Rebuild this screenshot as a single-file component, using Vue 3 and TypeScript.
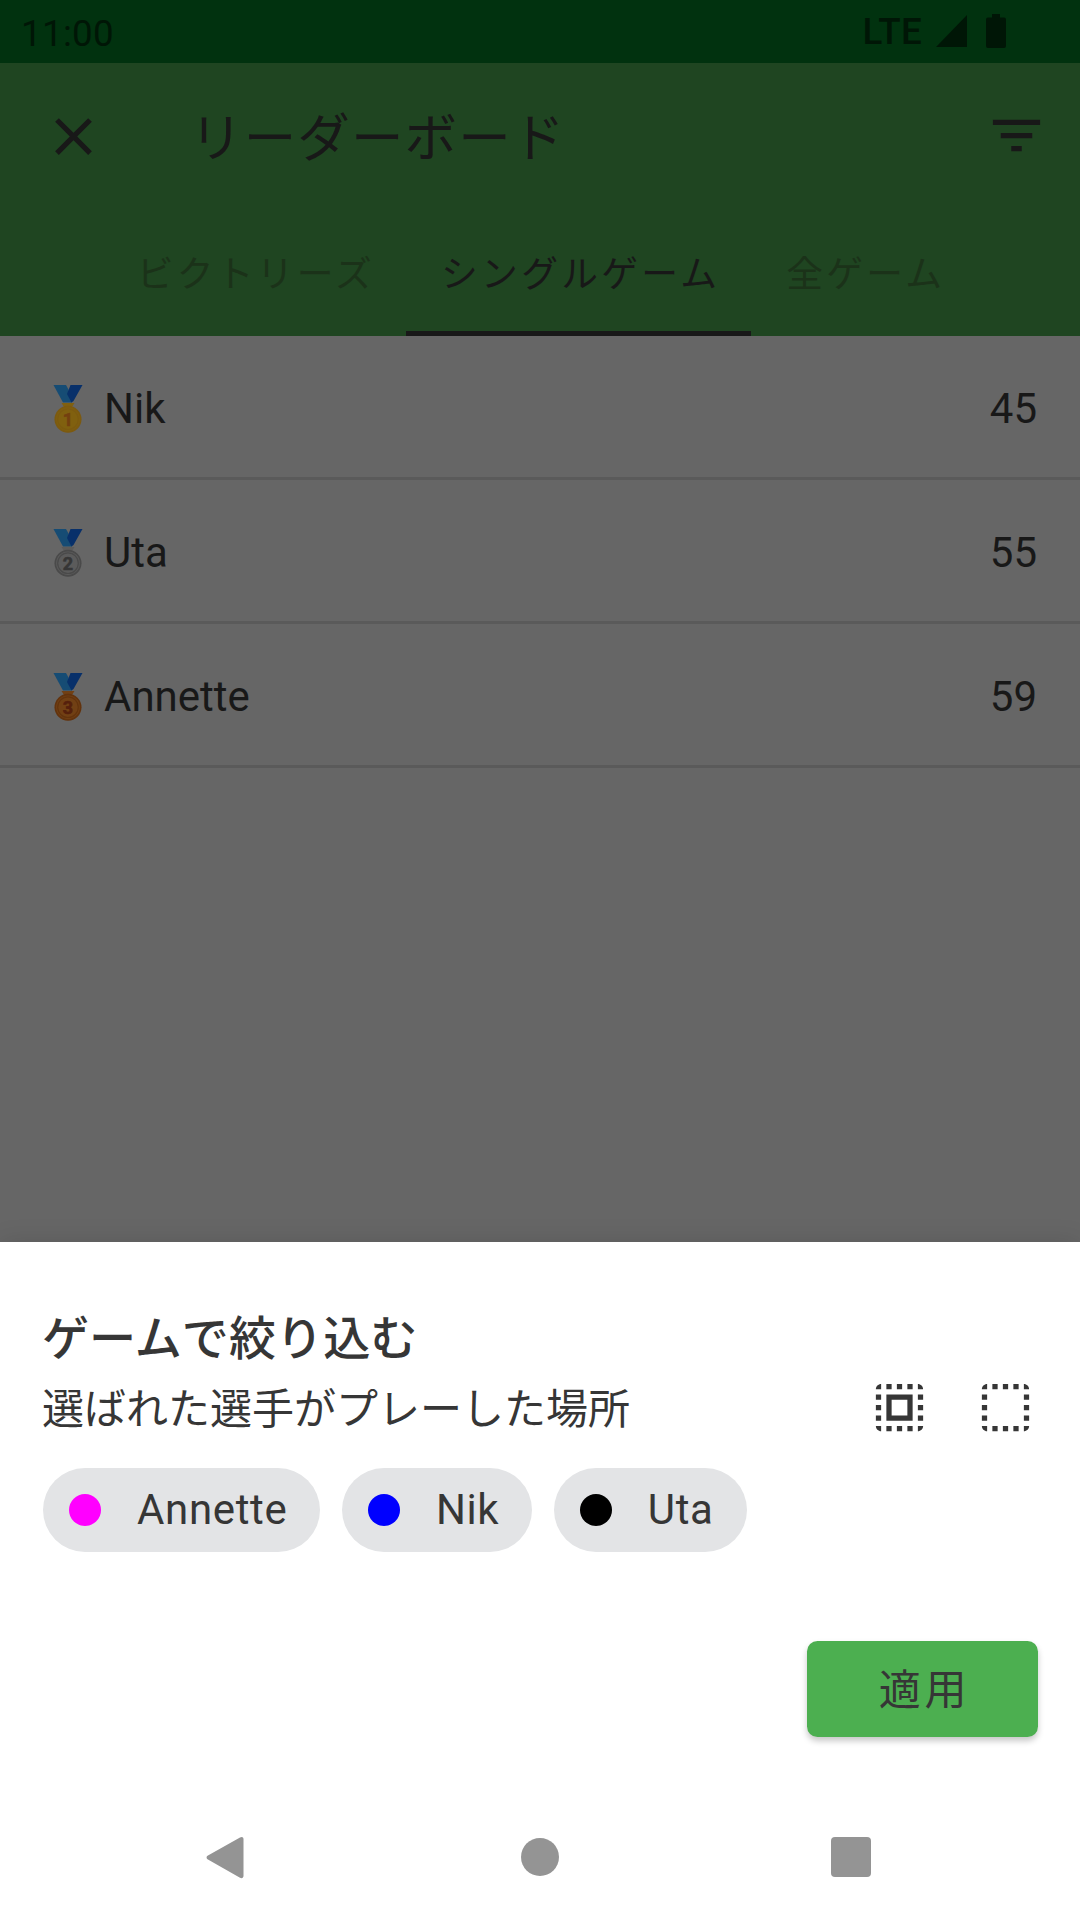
<script setup lang="ts">
interface Player {
  name: string
  score: number
  rank: number
  disc: string
  rim: string
  digit: string
}

interface Chip {
  name: string
  color: string
}

const tabs: { label: string; active: boolean }[] = [
  { label: 'ビクトリーズ', active: false },
  { label: 'シングルゲーム', active: true },
  { label: '全ゲーム', active: false },
]

const players: Player[] = [
  { name: 'Nik', score: 45, rank: 1, disc: '#80600f', rim: '#7c5a10', digit: '#74400f' },
  { name: 'Uta', score: 55, rank: 2, disc: '#5b5b5b', rim: '#4a4a4a', digit: '#363636' },
  { name: 'Annette', score: 59, rank: 3, disc: '#714014', rim: '#63330d', digit: '#55200c' },
]

const chips: Chip[] = [
  { name: 'Annette', color: '#ff00ff' },
  { name: 'Nik', color: '#0000ff' },
  { name: 'Uta', color: '#000000' },
]
</script>

<template>
  <div class="screen">
    <div class="status">
      <span class="clock">11:00</span>
      <span class="lte">LTE</span>
      <svg class="signal" viewBox="0 0 31 32"><path d="M31 0V32H0Z" /></svg>
      <svg class="battery" viewBox="0 0 20 34"><path d="M6 0h8v3.500h4a2 2 0 0 1 2 2V32a2 2 0 0 1-2 2H2a2 2 0 0 1-2-2V5.500a2 2 0 0 1 2-2h4z" /></svg>
    </div>

    <header class="appbar">
      <div class="toolbar">
        <svg class="icon" viewBox="0 0 24 24"><path d="M19 6.410 17.590 5 12 10.590 6.410 5 5 6.410 10.590 12 5 17.590 6.410 19 12 13.410 17.590 19 19 17.590 13.410 12z" /></svg>
        <h1 class="title">リーダーボード</h1>
        <svg class="icon filter" viewBox="0 0 24 24"><path d="M10 18h4v-2h-4v2zM3 6v2h18V6H3zm3 7h12v-2H6v2z" /></svg>
      </div>
      <nav class="tabs">
        <div v-for="t in tabs" :key="t.label" class="tab" :class="{ active: t.active }"><span>{{ t.label }}</span></div>
      </nav>
    </header>

    <main class="list">
      <div v-for="p in players" :key="p.rank" class="row">
        <svg class="medal" viewBox="0 0 30 48">
          <path d="M0.500 0H13L15.500 4.500 19 17.500H10Z" fill="#164c74" />
          <path d="M17.500 0H29.500L20.500 16 18.500 17.500 14 9Z" fill="#08306a" />
          <path d="M8.500 18h13l-2.500 4h-8z" :fill="p.disc" />
          <circle cx="15" cy="34.200" r="13.500" :fill="p.rim" />
          <circle cx="15" cy="34.200" r="11.800" :fill="p.disc" />
          <circle cx="15" cy="34.200" r="10.300" fill="none" :stroke="p.rim" stroke-width="1.200" />
          <text x="15" y="40.700" text-anchor="middle" :fill="p.digit" :stroke="p.digit">{{ p.rank }}</text>
        </svg>
        <span class="name">{{ p.name }}</span>
        <span class="score">{{ p.score }}</span>
      </div>
    </main>

    <section class="sheet">
      <h2 class="sheet-title">ゲームで絞り込む</h2>
      <div class="sub">
        <p>選ばれた選手がプレーした場所</p>
        <svg class="icon" viewBox="0 0 24 24"><path d="M3 5h2V3c-1.100 0-2 .9-2 2zm0 8h2v-2H3v2zm4 8h2v-2H7v2zM3 9h2V7H3v2zm10-6h-2v2h2V3zm6 0v2h2c0-1.100-.9-2-2-2zM5 21v-2H3c0 1.100.9 2 2 2zm-2-4h2v-2H3v2zM9 3H7v2h2V3zm2 18h2v-2h-2v2zm8-8h2v-2h-2v2zm0 8c1.100 0 2-.9 2-2h-2v2zm0-12h2V7h-2v2zm0 8h2v-2h-2v2zm-4 4h2v-2h-2v2zm0-16h2V3h-2v2zM7 17h10V7H7v10zm2-8h6v6H9V9z" /></svg>
        <svg class="icon" viewBox="0 0 24 24"><path d="M3 5h2V3c-1.100 0-2 .9-2 2zm0 8h2v-2H3v2zm4 8h2v-2H7v2zM3 9h2V7H3v2zm10-6h-2v2h2V3zm6 0v2h2c0-1.100-.9-2-2-2zM5 21v-2H3c0 1.100.9 2 2 2zm-2-4h2v-2H3v2zM9 3H7v2h2V3zm2 18h2v-2h-2v2zm8-8h2v-2h-2v2zm0 8c1.100 0 2-.9 2-2h-2v2zm0-12h2V7h-2v2zm0 8h2v-2h-2v2zm-4 4h2v-2h-2v2zm0-16h2V3h-2v2z" /></svg>
      </div>
      <div class="chips">
        <div v-for="c in chips" :key="c.name" class="chip">
          <i class="dot" :style="{ background: c.color }"></i>
          <span>{{ c.name }}</span>
        </div>
      </div>
      <button class="apply" type="button">適用</button>
    </section>

    <footer class="navbar">
      <svg width="38" height="43" viewBox="0 0 38 43"><path d="M34 1.500 1.500 19.800a2 2 0 0 0 0 3.400L34 41.700c1.800 1 3.500.2 3.500-1.600V3.100C37.500 1 35.800.4 34 1.500Z" /></svg>
      <svg class="home" width="40" height="40" viewBox="0 0 40 40"><circle cx="20" cy="20" r="19" /></svg>
      <svg width="40" height="40" viewBox="0 0 40 40"><rect width="40" height="40" rx="4" /></svg>
    </footer>
  </div>
</template>

<style>
body {
  margin: 0;
}
</style>

<style scoped>
.screen {
  width: 1080px;
  height: 1920px;
  display: flex;
  flex-direction: column;
  overflow: hidden;
  background: #666;
  color: #181818;
  font-family: Roboto, "Noto Sans CJK JP", sans-serif;
}
h1, h2, p {
  margin: 0;
  font-weight: 400;
}
svg {
  display: block;
  flex: none;
}
.icon {
  width: 63px;
  height: 63px;
  fill: currentColor;
}
.status {
  height: 63px;
  box-sizing: border-box;
  padding: 0 74px 0 21px;
  display: flex;
  align-items: flex-start;
  background: #01320f;
  color: #001606;
  font-size: 36.750px;
  line-height: 40px;
}
.clock {
  margin-top: 14px;
  letter-spacing: 0.300px;
}
.lte {
  margin: 12px 14px 0 auto;
  font-weight: 500;
  letter-spacing: 0.300px;
}
.signal {
  width: 31px;
  height: 32px;
  margin-top: 15px;
  fill: currentColor;
}
.battery {
  width: 20px;
  height: 34px;
  margin: 14px 0 0 19px;
  fill: currentColor;
}
.appbar {
  height: 273px;
  background: #1f4521;
}
.toolbar {
  height: 147px;
  box-sizing: border-box;
  padding: 0 32px 0 42px;
  display: flex;
  align-items: center;
}
.title {
  flex: 1;
  margin-left: 85px;
  padding-top: 4px;
  font-size: 52.500px;
  line-height: 60px;
  letter-spacing: 1.150px;
}
.filter {
  margin-bottom: 2px;
}
.tabs {
  height: 126px;
  display: flex;
  justify-content: center;
  padding-right: 2px;
}
.tab {
  height: 126px;
  padding: 2px 31px 0 35px;
  box-sizing: border-box;
  border-bottom: 5px solid transparent;
  line-height: 126px;
  font-size: 36.750px;
  letter-spacing: 3.280px;
  color: #1b3219;
}
.tab.active {
  color: #181818;
  border-color: #181818;
}
.row {
  height: 144px;
  box-sizing: border-box;
  padding: 4px 43px 0 53px;
  display: flex;
  align-items: center;
  border-bottom: 3px solid #5a5a5a;
  font-size: 42px;
}
.medal {
  width: 30px;
  height: 48px;
}
.medal text {
  font-size: 18px;
  font-weight: 700;
  stroke-width: 0.600px;
}
.name {
  flex: 1;
  margin-left: 21px;
}
.list {
  height: 906px;
}
.sheet {
  height: 558px;
  box-sizing: border-box;
  padding: 63px 42px 0;
  display: flex;
  flex-direction: column;
  background: #fff;
  color: #363636;
  box-shadow: 0 0 24px rgba(0, 0, 0, 0.120);
}
.sheet-title {
  height: 68px;
  font-size: 47.100px;
  line-height: 68px;
  font-weight: 500;
}
.sub {
  height: 74px;
  display: flex;
  align-items: center;
  gap: 43px;
}
.sub p {
  flex: 1;
  font-size: 42px;
  line-height: 74px;
}
.sub .icon {
  margin-bottom: 6px;
}
.sub .icon:last-child {
  margin-right: 1px;
}
.chips {
  margin: 21px 0 0 1px;
  display: flex;
  gap: 21.500px;
}
.chip {
  height: 84px;
  box-sizing: border-box;
  padding: 0 33px 1px 26px;
  border-radius: 42px;
  display: flex;
  align-items: center;
  background: #e3e4e6;
  font-size: 42px;
  letter-spacing: 0.650px;
}
.dot {
  width: 32px;
  height: 32px;
  margin-right: 36px;
  border-radius: 50%;
}
.apply {
  width: 231px;
  height: 96px;
  margin: 89px 0 0;
  padding: 4px 0 0 4px;
  align-self: flex-end;
  border: 0;
  border-radius: 10.500px;
  background: #4caf50;
  color: #363636;
  font: 400 42px/92px Roboto, "Noto Sans CJK JP", sans-serif;
  letter-spacing: 3.750px;
  box-shadow: 0 4px 6px rgba(0, 0, 0, 0.220);
}
.navbar {
  flex: 1;
  box-sizing: border-box;
  padding: 0 209px 6px 206px;
  display: flex;
  align-items: center;
  justify-content: space-between;
  background: #fff;
  fill: #949494;
}
.home {
  margin-left: 4px;
}
</style>
